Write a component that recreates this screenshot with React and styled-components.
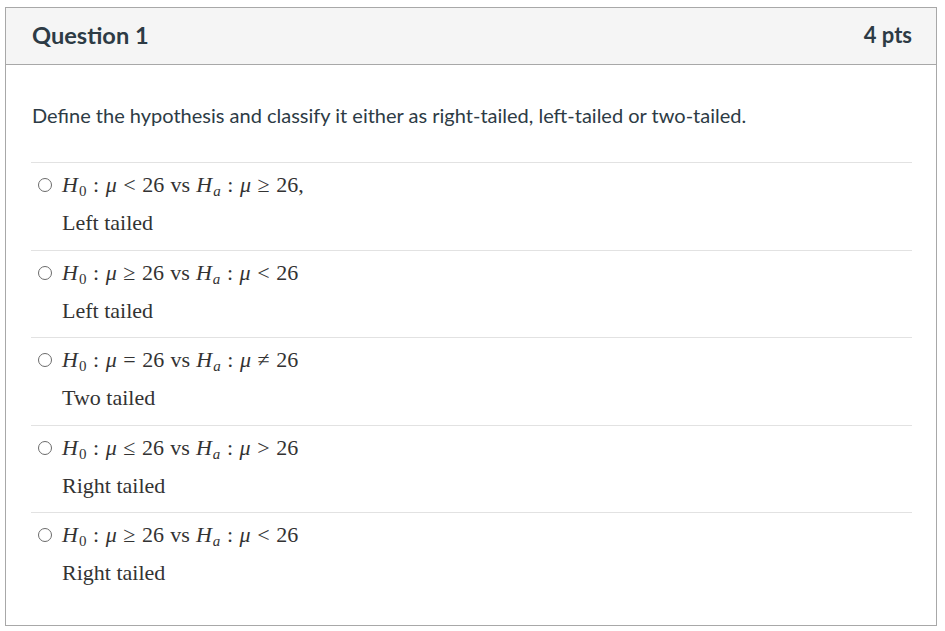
import styled, { createGlobalStyle } from "styled-components";

const GlobalStyle = createGlobalStyle`
  html, body {
    margin: 0;
    padding: 0;
    background: #fff;
  }
  body {
    font-family: Lato, "Liberation Sans", sans-serif;
    color: #2d3b45;
  }
`;

const options = [
  { rel0: "<", rel1: "≥", tail: ",", label: "Left tailed" },
  { rel0: "≥", rel1: "<", tail: "", label: "Left tailed" },
  { rel0: "=", rel1: "≠", tail: "", label: "Two tailed" },
  { rel0: "≤", rel1: ">", tail: "", label: "Right tailed" },
  { rel0: "≥", rel1: "<", tail: "", label: "Right tailed" },
];

const Hypothesis = ({ rel0, rel1, tail }) => (
  <MathLine>
    <Var>H</Var>
    <Sub>0</Sub>
    <Rel>:</Rel>
    <Var>μ</Var>
    <Rel>{rel0}</Rel>
    26
    <Word>vs</Word>
    <Var>H</Var>
    <Sub italic>a</Sub>
    <Rel>:</Rel>
    <Var>μ</Var>
    <Rel>{rel1}</Rel>
    26{tail}
  </MathLine>
);

const App = () => {
  return (
    <Page>
      <GlobalStyle />
      <Card>
        <Header>
          <Title>Question 1</Title>
          <Points>4 pts</Points>
        </Header>
        <Body>
          <Prompt>
            Define the hypothesis and classify it either as right-tailed,
            left-tailed or two-tailed.
          </Prompt>
          <Answers>
            {options.map((o, i) => (
              <Answer key={i}>
                <Radio type="radio" name="q1" />
                <AnswerText>
                  <Hypothesis {...o} />
                  <Label>{o.label}</Label>
                </AnswerText>
              </Answer>
            ))}
          </Answers>
        </Body>
      </Card>
    </Page>
  );
};

export default App;

const Page = styled.div`
  padding: 7px 8px 5px 5px;
`;

const Card = styled.section`
  border: 1px solid #a8a8a8;
  background: #fff;
`;

const Header = styled.header`
  display: flex;
  align-items: center;
  justify-content: space-between;
  height: 56px;
  padding: 0 24px 0 26px;
  background: #f5f5f5;
  border-bottom: 1px solid #a8a8a8;
`;

const Title = styled.h2`
  margin: -3px 0 0;
  font-size: 23.6px;
  font-weight: 700;
  color: #2d3b45;
`;

const Points = styled.div`
  font-size: 22px;
  font-weight: 700;
  color: #2d3b45;
  margin-top: -4px;
`;

const Body = styled.div`
  padding: 37px 24px 25px 25px;
`;

const Prompt = styled.p`
  margin: 0 0 33px 1px;
  font-size: 20px;
  line-height: 27px;
`;

const Answers = styled.div`
  display: flex;
  flex-direction: column;
`;

const Answer = styled.label`
  display: flex;
  align-items: flex-start;
  border-top: 1px solid #e2e2e2;
  padding: 9px 0 13.5px 7px;
`;

const Radio = styled.input`
  appearance: none;
  width: 14px;
  height: 14px;
  margin: 6px 10px 0 0;
  border: 1px solid #6b6b6b;
  border-radius: 50%;
  background: #fff;
  flex-shrink: 0;
`;

const AnswerText = styled.div`
  display: flex;
  flex-direction: column;
  font-family: "Liberation Serif", "DejaVu Serif", serif;
  color: #333;
`;

const MathLine = styled.div`
  font-size: 22px;
  line-height: 26px;
  white-space: nowrap;
`;

const Var = styled.i`
  font-style: italic;
`;

const Sub = styled.sub`
  font-size: 15px;
  font-style: ${(p) => (p.italic ? "italic" : "normal")};
  vertical-align: -4px;
  line-height: 0;
  margin-left: 1px;
`;

const Rel = styled.span`
  margin: 0 0.3em;
`;

const Word = styled.span`
  margin: 0 0.28em;
`;

const Label = styled.div`
  margin-top: 12px;
  font-size: 22px;
  line-height: 26px;
`;
